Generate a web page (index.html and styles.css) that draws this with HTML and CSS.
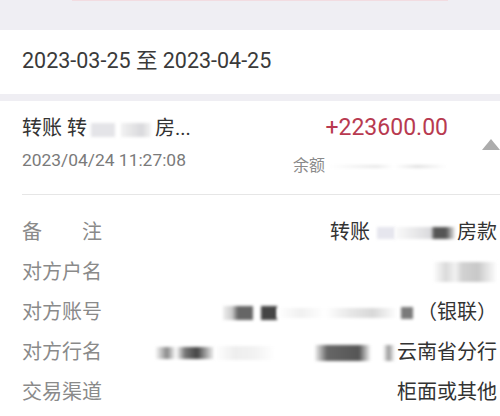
FILE: index.html
```
<!DOCTYPE html>
<html lang="zh-CN">
<head>
	<meta charset="UTF-8">
	<title>交易明细</title>
	<link rel="stylesheet" href="styles.css">
</head>
<body>
	<div class="top-strip">
		<div class="top-line"></div>
	</div>
	<div class="range">2023-03-25 至 2023-04-25</div>
	<div class="card">
		<div class="head">
			<div class="head-row">
				<div class="title">转账 转<span class="blur b1"></span><span class="blur b2"></span>房...</div>
				<div class="amount">+223600.00</div>
			</div>
			<div class="head-row sub">
				<div class="time">2023/04/24 11:27:08</div>
				<div class="balance">余额<span class="blur b3"></span></div>
			</div>
			<span class="arrow"></span>
		</div>
		<div class="details">
			<div class="row">
				<span class="label label-just"><i>备</i><i>注</i></span>
				<span class="value">转账 <span class="blur b4"></span><span class="blur b5"></span>房款</span>
			</div>
			<div class="row">
				<span class="label">对方户名</span>
				<span class="value"><span class="blur b6"></span></span>
			</div>
			<div class="row">
				<span class="label">对方账号</span>
				<span class="value"><span class="blur b7"></span><span class="blur b8"></span><span class="blur b9"></span><span class="blur b10"></span>（银联）</span>
			</div>
			<div class="row">
				<span class="label">对方行名</span>
				<span class="value"><span class="blur b11"></span><span class="blur b12"></span><span class="blur b13"></span>云南省分行</span>
			</div>
			<div class="row">
				<span class="label">交易渠道</span>
				<span class="value">柜面或其他</span>
			</div>
		</div>
	</div>
</body>
</html>
```
FILE: styles.css
```
* {padding: 0; margin: 0; box-sizing: border-box;}
body {
	background: #efeef3;
	font-family: Roboto, "Noto Sans CJK SC", sans-serif;
	color: #333;
	overflow: hidden;
}
.top-strip {
	height: 30px;
}
.top-line {
	height: 1px;
	margin: 0 52px 0 72px;
	background: #f2dce1;
}
.range {
	height: 64px;
	line-height: 62px;
	padding-left: 22px;
	background: #fff;
	font-size: 21.5px;
	color: #3a3a3a;
}
.card {
	margin-top: 7px;
	background: #fff;
	height: 330px;
}
.head {
	position: relative;
	margin-left: 22px;
	padding: 13px 52px 0 0;
	height: 94px;
	border-bottom: 1px solid #e6e6e6;
}
.head-row {
	display: flex;
	justify-content: space-between;
	align-items: center;
}
.title {
	font-size: 20px;
	line-height: 28px;
	color: #333;
	white-space: nowrap;
}
.amount {
	font-size: 23px;
	line-height: 28px;
	color: #b83a50;
}
.sub {
	margin-top: 6px;
	align-items: flex-start;
}
.time {
	font-size: 17.4px;
	line-height: 24px;
	color: #7a7a7a;
}
.balance {
	width: 155px;
	margin-top: 6px;
	font-size: 16px;
	line-height: 24px;
	color: #8a8a8a;
	white-space: nowrap;
}
.arrow {
	position: absolute;
	right: 0;
	top: 38px;
	width: 0;
	height: 0;
	border-left: 9px solid transparent;
	border-right: 9px solid transparent;
	border-bottom: 11px solid #acacac;
}
.blur {
	display: inline-block;
	vertical-align: middle;
	filter: blur(1.5px);
}
.b1 {width: 24px; height: 14px; background: #e4e4e8; margin-left: 4px;}
.b2 {width: 30px; height: 14px; margin: 0 4px 0 6px; background: linear-gradient(90deg, #f2f2f2, #d9d9dc 70%, #f4f4f4);}
.b3 {width: 118px; height: 3px; margin-left: 4px; background: linear-gradient(90deg, #fff, #e6e6e6 40%, #fff 55%, #dedede 75%, #fff);}
.b4 {width: 18px; height: 12px; background: #e6e6ee; margin-left: 2px;}
.b5 {width: 60px; height: 12px; background: linear-gradient(90deg, #fafafa, #dadadd 60%, #555 65%, #555 85%, #eee); margin-right: 2px;}
.b6 {width: 64px; height: 20px; background: linear-gradient(90deg, #fff, #dadada 20%, #f2f2f2 35%, #d2d2d2 45%, #c8c8c8 70%, #e4e4e4 85%, #fff);}
.b7 {width: 30px; height: 14px; background: linear-gradient(90deg, #eee, #ccc 30%, #666 50%, #666);}
.b8 {width: 16px; height: 14px; background: #444; margin-left: 8px;}
.b9 {width: 120px; height: 10px; background: linear-gradient(90deg, #fff, #f0f0f0 20%, #fff 40%, #e8e8e8 60%, #d8d8d8 80%, #fff);}
.b10 {width: 12px; height: 12px; background: #7a7a7a; margin: 0 4px 0 4px;}
.b11 {width: 60px; height: 12px; background: linear-gradient(90deg, #fff, #888 20%, #fff 35%, #777 50%, #444 70%, #fff);}
.b12 {width: 100px; height: 14px; background: linear-gradient(90deg, #fff, #eee 20%, #f2f2f2 40%, #fff 60%, #fff);}
.b13 {width: 80px; height: 16px; background: linear-gradient(90deg, #f0f0f0, #666 15%, #555 55%, #fff 70%, #fff 85%, #999 92%, #fff); margin-right: 2px;}
.details {
	padding: 15px 3px 0 22px;
}
.row {
	display: flex;
	justify-content: space-between;
	align-items: center;
	height: 40px;
	font-size: 20px;
}
.label {
	color: #8a8a8a;
	white-space: nowrap;
}
.label-just {
	display: flex;
	justify-content: space-between;
	width: 80px;
}
.label-just i {
	font-style: normal;
}
.value {
	color: #333;
	white-space: nowrap;
}
```
